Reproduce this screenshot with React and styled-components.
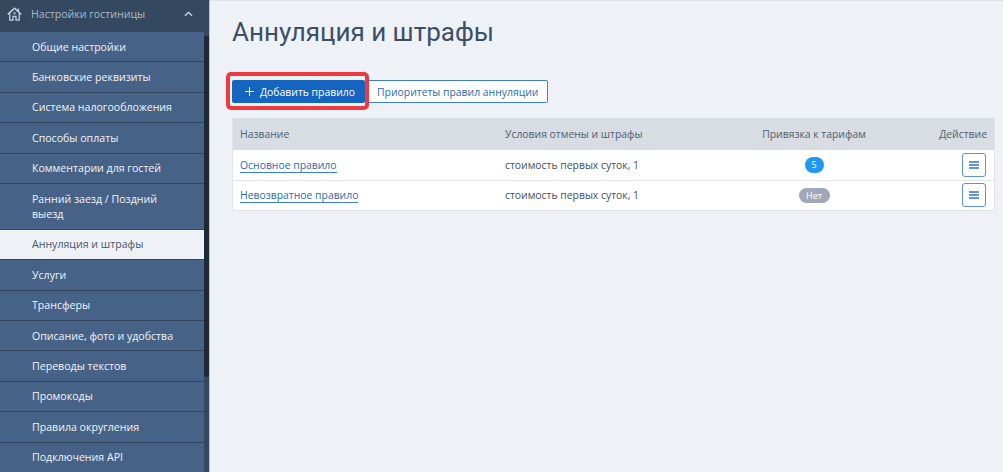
import React from 'react'
import styled, { createGlobalStyle } from 'styled-components'

const GlobalStyle = createGlobalStyle`
  html, body {
    margin: 0;
    height: 100%;
    overflow: hidden;
  }
  body {
    font-family: "Open Sans", "Noto Sans", sans-serif;
    background: #eef1f5;
  }
`

const menu = [
  'Общие настройки',
  'Банковские реквизиты',
  'Система налогообложения',
  'Способы оплаты',
  'Комментарии для гостей',
  'Ранний заезд / Поздний выезд',
  'Аннуляция и штрафы',
  'Услуги',
  'Трансферы',
  'Описание, фото и удобства',
  'Переводы текстов',
  'Промокоды',
  'Правила округления',
  'Подключения API',
]

const rules = [
  { name: 'Основное правило', terms: 'стоимость первых суток, 1', tariffs: '5', active: true },
  { name: 'Невозвратное правило', terms: 'стоимость первых суток, 1', tariffs: 'Нет', active: false },
]

function App() {
  return (
    <Page>
      <GlobalStyle />
      <Sidebar>
        <SectionHeader>
          <HomeIcon viewBox="0 0 15 14">
            <path d="M0.8 7.4 7.5 1.2l6.7 6.2M11.3 4.6V1.6" fill="none" stroke="#c3d0df" strokeWidth="1.5" />
            <path d="M2.8 6.6V13.2H6V9.4h3v3.8h3.2V6.6" fill="none" stroke="#c3d0df" strokeWidth="1.3" />
            <rect x="6.5" y="5.4" width="2" height="1.8" fill="#c3d0df" />
          </HomeIcon>
          <SectionTitle>Настройки гостиницы</SectionTitle>
          <Chevron viewBox="0 0 10 6">
            <path d="M1 5 5 1.2 9 5" fill="none" stroke="#c3cfdd" strokeWidth="1.6" />
          </Chevron>
        </SectionHeader>
        <MenuArea>
          <Menu>
            {menu.map((item) => (
              <MenuItem key={item} $active={item === 'Аннуляция и штрафы'}>{item}</MenuItem>
            ))}
          </Menu>
          <ScrollThumb />
        </MenuArea>
      </Sidebar>
      <Main>
        <Title>Аннуляция и штрафы</Title>
        <Controls>
          <PrimaryButton>
            <PlusIcon viewBox="0 0 9 9">
              <path d="M4.5 0v9M0 4.5h9" stroke="#fff" strokeWidth="1" />
            </PlusIcon>
            Добавить правило
          </PrimaryButton>
          <OutlineButton>Приоритеты правил аннуляции</OutlineButton>
          <HighlightFrame />
        </Controls>
        <Table>
          <HeadRow>
            <NameCell>Название</NameCell>
            <div>Условия отмены и штрафы</div>
            <TariffCell>Привязка к тарифам</TariffCell>
            <HeadAction>Действие</HeadAction>
          </HeadRow>
          {rules.map((rule) => (
            <Row key={rule.name}>
              <NameCell><RuleLink>{rule.name}</RuleLink></NameCell>
              <div>{rule.terms}</div>
              <TariffCell><Badge $active={rule.active}>{rule.tariffs}</Badge></TariffCell>
              <ActionCell>
                <MenuButton>
                  <svg width="10" height="8" viewBox="0 0 10 8">
                    <path d="M0 1h10M0 4h10M0 7h10" stroke="#2f76c4" strokeWidth="1.3" />
                  </svg>
                </MenuButton>
              </ActionCell>
            </Row>
          ))}
        </Table>
      </Main>
    </Page>
  )
}

export default App

const Page = styled.div`
  display: flex;
  height: 472px;
  overflow: hidden;
`

const Sidebar = styled.aside`
  width: 210px;
  flex-shrink: 0;
  box-sizing: border-box;
  display: flex;
  flex-direction: column;
  background: #34495f;
  border-right: 1px solid #b5c2d0;
`

const SectionHeader = styled.div`
  height: 28px;
  padding: 0 0 4px 7px;
  flex-shrink: 0;
  display: flex;
  align-items: center;
`

const HomeIcon = styled.svg`
  width: 15px;
  height: 14px;
  margin-right: 9px;
`

const SectionTitle = styled.span`
  font-size: 10.6px;
  color: #a9bacd;
`

const Chevron = styled.svg`
  width: 9px;
  height: 6px;
  margin-left: 39px;
`

const MenuArea = styled.div`
  position: relative;
  flex: 1;
  min-height: 0;
`

const Menu = styled.ul`
  width: 204px;
  margin: 0;
  padding: 0;
  list-style: none;
`

const MenuItem = styled.li`
  padding: 7.5px 22px 6.5px 32px;
  font-size: 10.6px;
  line-height: 15.4px;
  color: ${(p) => (p.$active ? '#44586d' : '#f1f4f8')};
  background: ${(p) => (p.$active ? '#eef1f5' : '#476287')};
  border-bottom: 1px solid #34495f;
`

const ScrollThumb = styled.div`
  position: absolute;
  top: 4px;
  right: 0;
  width: 5px;
  height: 341px;
  background: #1c2a38;
  border-radius: 3px;
`

const Main = styled.main`
  flex: 1;
  min-width: 0;
  padding: 0 8px 0 22px;
  border-top: 1px solid #e0e4ea;
`

const Title = styled.h1`
  margin: 15px 0 0;
  font-family: Roboto, "Open Sans", sans-serif;
  font-size: 26px;
  line-height: 32px;
  font-weight: 400;
  color: #3b4f66;
`

const Controls = styled.div`
  position: relative;
  display: flex;
  margin-top: 32px;
`

const HighlightFrame = styled.div`
  position: absolute;
  left: -6px;
  top: -8px;
  width: 143px;
  height: 38px;
  box-sizing: border-box;
  border: 4px solid #ec3a3f;
  border-radius: 5px;
`

const PrimaryButton = styled.button`
  display: flex;
  align-items: center;
  height: 23px;
  width: 133px;
  padding: 0 0 0 13px;
  border: 0;
  border-radius: 2px;
  background: #1565c0;
  color: #fff;
  font: 10.4px "Open Sans", sans-serif;
`

const PlusIcon = styled.svg`
  width: 9px;
  height: 9px;
  margin-right: 6px;
`

const OutlineButton = styled.button`
  height: 23px;
  width: 183px;
  padding: 0 0 0 12px;
  text-align: left;
  border: 1px solid #3f7fc4;
  border-left: 0;
  border-radius: 0 2px 2px 0;
  background: #fff;
  color: #2a6cb3;
  font: 10.4px "Open Sans", sans-serif;
`

const Table = styled.div`
  margin-top: 15px;
  background: #fff;
  border: 1px solid #e0e4ea;
  border-top: 0;
`

const Row = styled.div`
  display: grid;
  box-sizing: border-box;
  grid-template-columns: 272px 195px 228px 1fr;
  align-items: center;
  height: 31px;
  font-size: 10.4px;
  color: #44505c;
  border-bottom: 1px solid #e0e4ea;

  &:last-child {
    border-bottom: 0;
    height: 29px;
    padding-bottom: 1px;
  }
`

const HeadRow = styled(Row)`
  height: 32px;
  background: #d8dce3;
  color: #4f5f70;
  border-bottom: 0;
`

const NameCell = styled.div`
  padding-left: 7px;
`

const TariffCell = styled.div`
  text-align: center;
`

const ActionCell = styled.div`
  display: flex;
  justify-content: flex-end;
  padding-right: 8px;
`

const HeadAction = styled(ActionCell)`
  padding-right: 7px;
`

const RuleLink = styled.a`
  color: #2a6cb3;
  border-bottom: 1px solid #3f7fc4;
`

const Badge = styled.span`
  display: inline-block;
  min-width: 19px;
  padding: 0 ${(p) => (p.$active ? '0' : '6px')};
  height: ${(p) => (p.$active ? '16px' : '15px')};
  line-height: ${(p) => (p.$active ? '16px' : '15px')};
  border-radius: 8px;
  background: ${(p) => (p.$active ? '#2196f3' : '#a0a8b8')};
  color: #fff;
  font-size: 9px;
  font-weight: 500;
  text-align: center;
`

const MenuButton = styled.button`
  display: flex;
  align-items: center;
  justify-content: center;
  width: 24px;
  height: 24px;
  padding: 0;
  border: 1px solid #5d93cf;
  border-radius: 3px;
  background: #fff;
`
